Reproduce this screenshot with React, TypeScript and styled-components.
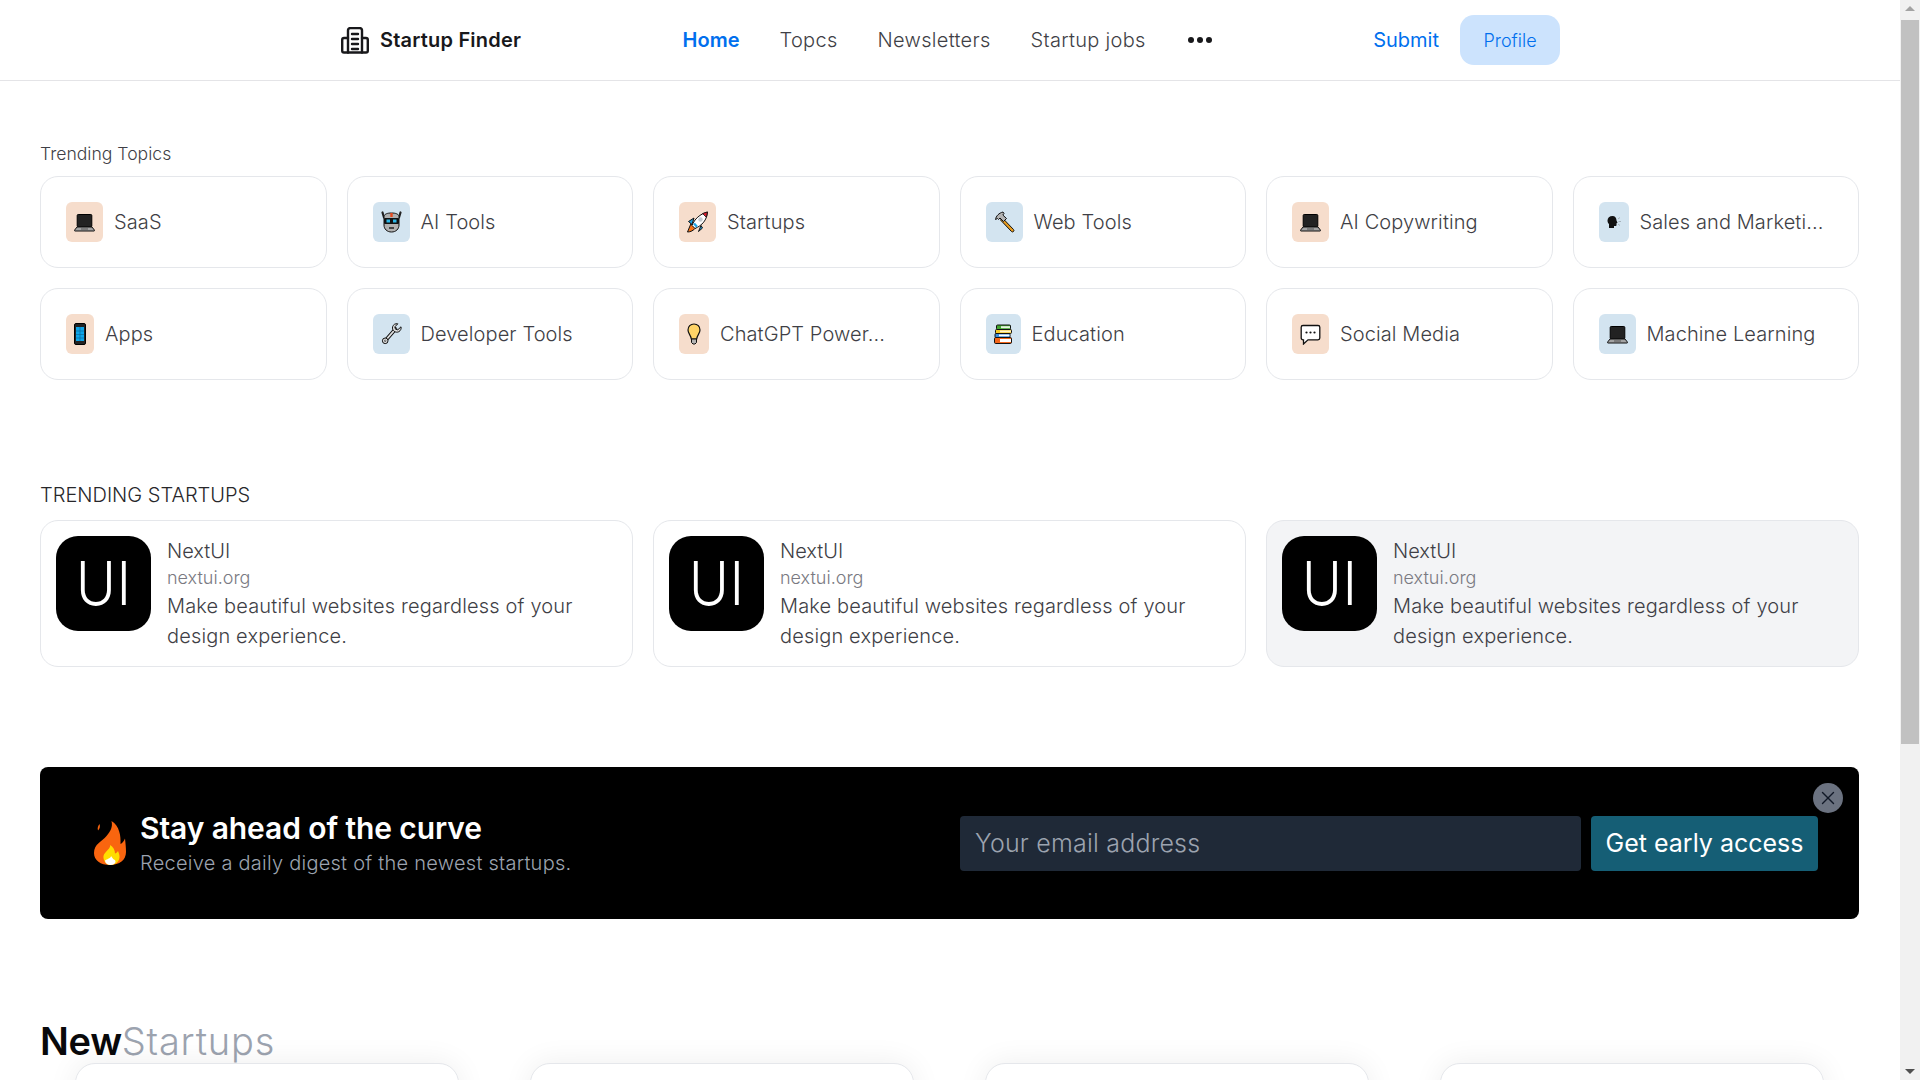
import { X } from 'lucide-react';
import { ReactNode } from 'react';
import styled, { createGlobalStyle } from 'styled-components';

const FONT = `Inter, "Liberation Sans", sans-serif`;

const GlobalStyle = createGlobalStyle`
  html, body {
    margin: 0;
    padding: 0;
    height: 100%;
    overflow: hidden;
    background: #ffffff;
    font-family: ${FONT};
  }
  * {
    box-sizing: border-box;
  }
`;

/* emoji drawings, the reference shows the black-outlined system set */
const LaptopIcon = () => (
  <svg width="21" height="22" viewBox="0 0 21 22">
    <rect x="3.2" y="3.500" width="14.600" height="12.500" rx="1" fill="#222" stroke="#000" />
    <path d="M3 16h15l2.500 3.200c.2.400 0 .8-.5.8H1c-.5 0-.7-.4-.5-.8z" fill="#a2a2a2" stroke="#111" />
    <path d="M7 18h7" stroke="#555" />
  </svg>
);

const RobotIcon = () => (
  <svg width="21" height="22" viewBox="0 0 21 22">
    <path d="M1.500 1.500l1.500 5M19.500 1.500l-1.500 5" fill="none" stroke="#222" strokeWidth="2.200" strokeLinecap="round" />
    <path d="M3 5c1-2 3-3 7.500-3s6.500 1 7.500 3v9c0 4-3 7-7.500 7S3 18 3 14z" fill="#b0b0b0" stroke="#111" />
    <rect x="9.300" y="2" width="2.400" height="4" fill="#e8491d" />
    <rect x="3" y="7" width="15" height="6" rx="1" fill="#111" />
    <rect x="5.500" y="8.500" width="3.500" height="3" fill="#2cb7e8" />
    <rect x="12" y="8.500" width="3.500" height="3" fill="#2cb7e8" />
    <path d="M8 17h5" stroke="#222" strokeWidth="1.500" />
  </svg>
);

const PhoneIcon = () => (
  <svg width="12" height="22" viewBox="0 0 12 22">
    <rect x=".5" y=".5" width="11" height="21" rx="1.500" fill="#222" stroke="#000" />
    <rect x="2" y="4" width="8" height="14" fill="#0ea5e9" />
    <path d="M2 8h8M2 11.500h8M2 15h8M6 4v14" stroke="#0b6b9e" strokeWidth=".7" />
  </svg>
);

const RocketIcon = () => (
  <svg width="21" height="22" viewBox="0 0 21 22">
    <path d="M4 12.500L.5 21c3 0 6-1.500 8-4z" fill="#f97316" stroke="#111" />
    <path d="M7 7L1.500 10.500l3.500 3zM14 14.500L11.500 20.500l4-3.500z" fill="#1ea3e6" stroke="#111" />
    <path d="M5 14.500C7.500 8 13 3 20.500 1 20 9 15 14.500 8 17.500z" fill="#ffffff" stroke="#111" />
    <path d="M15.500 2.500l5-1.500-1.200 5.300z" fill="#e11d2e" stroke="#111" strokeWidth=".8" />
    <circle cx="13.500" cy="8.500" r="2.200" fill="#c3cad0" />
    <path d="M7 12.500l3 3.300" stroke="#1ea3e6" strokeWidth="2.400" />
  </svg>
);

const HammerIcon = () => (
  <svg width="21" height="22" viewBox="0 0 21 22">
    <path d="M8.500 7l-2 2 11 11.500c.6.600 1.400.600 2 0 .6-.6.6-1.400 0-2z" fill="#e79b1e" stroke="#111" />
    <path d="M1.500 8.500C2 5 5 2 9 1l1 1.500L8.800 4l3.700 3.500-3 3L6 7 4.500 8.500l-1-1z" fill="#b4b4b4" stroke="#111" />
  </svg>
);

const WrenchIcon = () => (
  <svg width="21" height="22" viewBox="0 0 21 22">
    <path d="M4.500 17.500L14.500 6" stroke="#111" strokeWidth="3.600" strokeLinecap="round" />
    <path d="M4.500 17.500L14.500 6" stroke="#e0e0e0" strokeWidth="1.900" strokeLinecap="round" />
    <path
      d="M20 3.800l-3.200 3-2.300-.6-.7-2.300 3-3.100c-2.500-.5-4.700.9-5.200 3-.4 1.800.2 3.300 1.500 4.400 1.400 1.100 3.200 1.300 4.700.5 1.900-1 2.700-3.300 2.200-4.900z"
      fill="#e0e0e0"
      stroke="#111"
      strokeWidth="1"
    />
    <circle cx="4.200" cy="17.800" r="2.800" fill="#e0e0e0" stroke="#111" strokeWidth="1" />
    <circle cx="4.200" cy="17.800" r=".8" fill="#fff" stroke="#111" strokeWidth=".6" />
  </svg>
);

const BulbIcon = () => (
  <svg width="14" height="22" viewBox="0 0 14 22">
    <path d="M7 1C3.500 1 1 3.500 1 7c0 3.500 2.800 5 3.300 9h5.400c.5-4 3.300-5.500 3.300-9 0-3.500-2.500-6-6-6z" fill="#ffd467" stroke="#111" strokeWidth="1.200" />
    <path d="M4.500 16h5v3.500L8 21H6l-1.500-1.500z" fill="#b4b4b4" stroke="#111" />
  </svg>
);

const BooksIcon = () => (
  <svg width="19" height="22" viewBox="0 0 19 22">
    <rect x="2.500" y="2" width="14" height="4.500" rx="1" fill="#43a82f" stroke="#111" />
    <rect x="7" y="3.200" width="9" height="2" fill="#e6f5e0" />
    <rect x="1.500" y="6.500" width="16" height="4" rx="1" fill="#f7c824" stroke="#111" />
    <rect x="6" y="7.500" width="11" height="1.800" fill="#fff6cf" />
    <rect x="1" y="10.500" width="15" height="4" rx="1" fill="#3b8ddd" stroke="#111" />
    <rect x="5" y="11.500" width="10.500" height="1.800" fill="#ffffff" />
    <rect x=".5" y="14.500" width="17" height="6" rx="1.200" fill="#f4661b" stroke="#111" />
    <rect x="6" y="16" width="11" height="3" fill="#ffffff" />
  </svg>
);

const BubbleIcon = () => (
  <svg width="21" height="22" viewBox="0 0 21 22">
    <path d="M3 2.500h15c1 0 1.800.8 1.800 1.800V15c0 1-.8 1.800-1.800 1.800H8L3.500 21v-4.200H3c-1 0-1.800-.8-1.800-1.800V4.300c0-1 .8-1.800 1.800-1.800z" fill="#fff" stroke="#111" strokeWidth="1.300" />
    <circle cx="6.500" cy="9.500" r="1.100" fill="#111" />
    <circle cx="10.500" cy="9.500" r="1.100" fill="#111" />
    <circle cx="14.500" cy="9.500" r="1.100" fill="#111" />
  </svg>
);

const SpeakerIcon = () => (
  <svg width="14" height="22" viewBox="0 3 14 16">
    <path d="M5.500 5C2.500 5 .5 7 .5 9.500c0 1.800.8 2.800 1.500 3.600V17h5v-2h1.500c.6 0 1-.4 1-1v-1.700l1-.5-1-2.300C9.500 7 8 5 5.500 5z" fill="#111" />
    <path d="M11 8l2-1.500M11.500 10.500H14M11 13l2 1.500" stroke="#9aa5ad" strokeWidth=".8" />
  </svg>
);

const FireIcon = () => (
  <svg width="32" height="44" viewBox="0 0 32 44">
    <path d="M5.500 3c-1.500 2-2.300 4-1.500 6.500C5.500 8 6.500 5.500 5.500 3z" fill="#f9650f" />
    <path d="M17.500 0c1.500 6 -1 10 -5 15C8 20.500 0 23 0 32c0 7.500 6.500 12 16 12s16-5 16-13c0-5-.6-10-1-13.500-1.200 3-2.700 4.500-4.500 5.500C27 15 25.500 5 17.500 0z" fill="#f9650f" />
    <path d="M16 24c1 3-4 6-6 9.500-2 4 1.500 10.500 6 10.500 6 0 10-4 9.500-9-.2-2-1-4-1.500-5-1 1.500-2 2.300-3 2.500C21 29 19 25.500 16 24z" fill="#ffdd00" />
    <path d="M17 35c.3 1.500-2 2.500-3 2.800 0 .5-2.500 1-3 1.800C11 42 13 44 16 44c3.500 0 5.500-1.500 5.500-3.500 0-1-.5-1.500-1-1.800-.8.6-2.500-2.700-3.500-3.700z" fill="#ffffff" />
  </svg>
);

const BuildingLogo = () => (
  <BrandMark width="28" height="27" viewBox="0 0 28 27" fill="none" stroke="#18181b" strokeWidth="2.400" strokeLinecap="round" strokeLinejoin="round">
    <path d="M7 25.500V3.500c0-1.400 1-2.400 2.400-2.400h9.200c1.400 0 2.400 1 2.400 2.400v22" />
    <path d="M7 11H3C2 11 1.200 11.800 1.200 12.800v11c0 1 .8 1.700 1.800 1.700h22c1 0 1.800-.7 1.800-1.700v-11c0-1-.8-1.800-1.800-1.800h-4" />
    <path d="M11 7h6M11 12h6M11 17h6M11 22h6" />
  </BrandMark>
);

const DotsIcon = () => (
  <DotsMark width="24" height="8" viewBox="0 0 24 8" fill="#18181b">
    <circle cx="3" cy="4" r="3" />
    <circle cx="12" cy="4" r="3" />
    <circle cx="21" cy="4" r="3" />
  </DotsMark>
);

type Tint = 'peach' | 'blue';

const topics: { label: string; tint: Tint; icon: ReactNode }[] = [
  { label: 'SaaS', tint: 'peach', icon: <LaptopIcon /> },
  { label: 'AI Tools', tint: 'blue', icon: <RobotIcon /> },
  { label: 'Startups', tint: 'peach', icon: <RocketIcon /> },
  { label: 'Web Tools', tint: 'blue', icon: <HammerIcon /> },
  { label: 'AI Copywriting', tint: 'peach', icon: <LaptopIcon /> },
  { label: 'Sales and Marketi...', tint: 'blue', icon: <SpeakerIcon /> },
  { label: 'Apps', tint: 'peach', icon: <PhoneIcon /> },
  { label: 'Developer Tools', tint: 'blue', icon: <WrenchIcon /> },
  { label: 'ChatGPT Power...', tint: 'peach', icon: <BulbIcon /> },
  { label: 'Education', tint: 'blue', icon: <BooksIcon /> },
  { label: 'Social Media', tint: 'peach', icon: <BubbleIcon /> },
  { label: 'Machine Learning', tint: 'blue', icon: <LaptopIcon /> },
];

export default function App() {
  return (
    <Shell>
      <GlobalStyle />
      <Page>
        <Header>
          <HeaderInner>
            <Brand>
              <BuildingLogo />
              <BrandName>Startup Finder</BrandName>
            </Brand>
            <Nav>
              <NavLink $active>Home</NavLink>
              <NavLink>Topcs</NavLink>
              <NavLink>Newsletters</NavLink>
              <NavLink>Startup jobs</NavLink>
              <DotsIcon />
            </Nav>
            <Actions>
              <SubmitLink>Submit</SubmitLink>
              <ProfileButton>Profile</ProfileButton>
            </Actions>
          </HeaderInner>
        </Header>
        <Main>
          <TopicsLabel>Trending Topics</TopicsLabel>
          <TopicGrid>
            {topics.map((t) => (
              <TopicCard key={t.label}>
                <EmojiBox $tint={t.tint}>{t.icon}</EmojiBox>
                <TopicName>{t.label}</TopicName>
              </TopicCard>
            ))}
          </TopicGrid>

          <StartupsLabel>TRENDING STARTUPS</StartupsLabel>
          <StartupGrid>
            {[false, false, true].map((hovered, i) => (
              <StartupCard key={i} $hovered={hovered}>
                <StartupLogo>
                  <LogoText>UI</LogoText>
                </StartupLogo>
                <StartupBody>
                  <StartupName>NextUI</StartupName>
                  <StartupUrl>nextui.org</StartupUrl>
                  <StartupText>Make beautiful websites regardless of your design experience.</StartupText>
                </StartupBody>
              </StartupCard>
            ))}
          </StartupGrid>

          <Banner>
            <CloseButton>
              <X size={22} strokeWidth={1.5} />
            </CloseButton>
            <BannerLead>
              <FireIcon />
              <div>
                <BannerTitle>Stay ahead of the curve</BannerTitle>
                <BannerText>Receive a daily digest of the newest startups.</BannerText>
              </div>
            </BannerLead>
            <SignupForm>
              <EmailInput placeholder="Your email address" />
              <AccessButton>Get early access</AccessButton>
            </SignupForm>
          </Banner>

          <NewHeading>
            New<NewHeadingMuted>Startups</NewHeadingMuted>
          </NewHeading>
          <NewGrid>
            <NewCard />
            <NewCard />
            <NewCard />
            <NewCard />
          </NewGrid>
        </Main>
      </Page>
      <ScrollTrack>
        <ScrollArrow $dir="up" />
        <ScrollThumb />
        <ScrollSpace />
        <ScrollArrow $dir="down" />
      </ScrollTrack>
    </Shell>
  );
}

const Shell = styled.div`
  display: flex;
  height: 100vh;
  overflow: hidden;
`;

const Page = styled.div`
  flex: 1;
  min-width: 0;
  overflow: hidden;
`;

const Header = styled.header`
  height: 81px;
  border-bottom: 1px solid #e4e4e7;
`;

const HeaderInner = styled.div`
  display: flex;
  align-items: center;
  justify-content: space-between;
  width: 1220px;
  height: 80px;
  margin: 0 auto;
`;

const Brand = styled.div`
  display: flex;
  align-items: center;
  gap: 11px;
`;

const BrandMark = styled.svg`
  margin-left: 1px;
`;

const BrandName = styled.span`
  font-size: 20px;
  font-weight: 600;
  letter-spacing: 0.2px;
  color: #18181b;
`;

const Nav = styled.nav`
  display: flex;
  align-items: center;
  gap: 40px;
`;

const NavLink = styled.a<{ $active?: boolean }>`
  font-size: 20px;
  font-weight: ${(p) => (p.$active ? 600 : 350)};
  letter-spacing: ${(p) => (p.$active ? 0 : 0.3)}px;
  color: ${(p) => (p.$active ? '#006fee' : '#3f3f46')};
`;

const DotsMark = styled.svg`
  margin-left: 2px;
`;

const Actions = styled.div`
  display: flex;
  align-items: center;
  gap: 21px;
`;

const SubmitLink = styled.a`
  font-size: 20px;
  color: #006fee;
`;

const ProfileButton = styled.button`
  width: 100px;
  height: 50px;
  border: 0;
  border-radius: 14px;
  background: #cce3fd;
  color: #006fee;
  font-family: ${FONT};
  font-size: 18px;
  font-weight: 350;
`;

const Main = styled.main`
  padding: 61px 41px 0 40px;
`;

const TopicsLabel = styled.div`
  font-size: 17.6px;
  font-weight: 350;
  line-height: 24px;
  color: #3f3f46;
`;

const TopicGrid = styled.div`
  display: grid;
  grid-template-columns: repeat(6, 1fr);
  gap: 20px;
  margin-top: 10px;
`;

const TopicCard = styled.div`
  display: flex;
  align-items: center;
  gap: 11px;
  height: 92px;
  padding-left: 25px;
  border: 1px solid #e5e7eb;
  border-radius: 18px;
  background: #ffffff;
`;

const EmojiBox = styled.span<{ $tint: Tint }>`
  display: flex;
  align-items: center;
  justify-content: center;
  height: 40px;
  padding: 0 8px;
  border-radius: 6px;
  background: ${(p) => (p.$tint === 'peach' ? '#f6ddcc' : '#d3e4f0')};
`;

const TopicName = styled.span`
  font-size: 20px;
  font-weight: 350;
  letter-spacing: 0.1px;
  color: #3f3f46;
  white-space: nowrap;
`;

const StartupsLabel = styled.div`
  margin-top: 101px;
  font-size: 20px;
  font-weight: 350;
  line-height: 28px;
  color: #27272a;
`;

const StartupGrid = styled.div`
  display: grid;
  grid-template-columns: repeat(3, 1fr);
  gap: 20px;
  margin-top: 11px;
`;

const StartupCard = styled.div<{ $hovered: boolean }>`
  display: flex;
  gap: 16px;
  height: 147px;
  padding: 15px;
  border: 1px solid #e5e7eb;
  border-radius: 18px;
  background: ${(p) => (p.$hovered ? '#f3f4f6' : '#ffffff')};
`;

const StartupLogo = styled.div`
  display: flex;
  flex: none;
  align-items: center;
  justify-content: center;
  width: 95px;
  height: 95px;
  padding-bottom: 2px;
  border-radius: 22px;
  background: #000000;
`;

const LogoText = styled.span`
  display: block;
  color: #ffffff;
  font-size: 60px;
  font-weight: 300;
  line-height: 1;
  letter-spacing: 1px;
  transform: scaleX(0.9);
`;

const StartupBody = styled.div`
  min-width: 0;
  padding-top: 1px;
  padding-right: 30px;
`;

const StartupName = styled.div`
  font-size: 20px;
  font-weight: 350;
  line-height: 28px;
  color: #3f3f46;
`;

const StartupUrl = styled.div`
  font-size: 18px;
  font-weight: 350;
  line-height: 26px;
  color: #7a7a82;
`;

const StartupText = styled.div`
  font-size: 20px;
  font-weight: 350;
  line-height: 30px;
  letter-spacing: 0.15px;
  color: #3f3f46;
`;

const Banner = styled.section`
  position: relative;
  display: flex;
  align-items: center;
  justify-content: space-between;
  height: 152px;
  margin-top: 100px;
  padding: 0 41px 0 54px;
  border-radius: 8px;
  background: #000000;
`;

const CloseButton = styled.button`
  position: absolute;
  top: 16px;
  right: 16px;
  display: flex;
  align-items: center;
  justify-content: center;
  width: 30px;
  height: 30px;
  padding: 0;
  border: 0;
  border-radius: 50%;
  background: #6b7280;
  color: #111827;
`;

const BannerLead = styled.div`
  display: flex;
  align-items: center;
  gap: 14px;
`;

const BannerTitle = styled.div`
  font-size: 30px;
  font-weight: 600;
  line-height: 36px;
  letter-spacing: -0.1px;
  color: #ffffff;
`;

const BannerText = styled.div`
  margin-top: 3px;
  font-size: 20px;
  font-weight: 350;
  line-height: 28px;
  letter-spacing: 0.25px;
  color: #9ca3af;
`;

const SignupForm = styled.form`
  display: flex;
  gap: 10px;
`;

const EmailInput = styled.input`
  width: 621px;
  height: 55px;
  padding: 0 15px;
  border: 0;
  border-radius: 4px;
  background: #1f2937;
  color: #ffffff;
  font-family: ${FONT};
  font-size: 25px;
  font-weight: 350;
  letter-spacing: 0.2px;

  &::placeholder {
    color: #9ca3af;
    opacity: 1;
  }
`;

const AccessButton = styled.button`
  width: 227px;
  height: 55px;
  padding: 0;
  border: 0;
  border-radius: 4px;
  background: #155e75;
  color: #ffffff;
  font-family: ${FONT};
  font-size: 25px;
  font-weight: 400;
`;

const NewHeading = styled.h2`
  margin: 102px 0 0;
  font-size: 38px;
  font-weight: 600;
  line-height: 40px;
  letter-spacing: -0.3px;
  color: #09090b;
`;

const NewHeadingMuted = styled.span`
  font-weight: 300;
  letter-spacing: 0.8px;
  color: #9ca3af;
`;

const NewGrid = styled.div`
  display: grid;
  grid-template-columns: repeat(4, 1fr);
  justify-items: center;
  margin-top: 2px;
`;

const NewCard = styled.div`
  width: 384px;
  height: 320px;
  border: 1px solid #e5e7eb;
  border-radius: 20px;
  background: #ffffff;
  box-shadow: 0 0 30px rgba(0, 0, 0, 0.07);
`;

const ScrollTrack = styled.aside`
  display: flex;
  flex: none;
  flex-direction: column;
  width: 20px;
  background: #f1f1f1;
`;

const ScrollArrow = styled.div<{ $dir: 'up' | 'down' }>`
  flex: none;
  width: 0;
  height: 0;
  margin: ${(p) => (p.$dir === 'up' ? '6px 5px 9px' : '9px 5px 6px')};
  border-left: 5px solid transparent;
  border-right: 5px solid transparent;
  ${(p) => (p.$dir === 'up' ? 'border-bottom: 5px solid #a3a3a3;' : 'border-top: 5px solid #505050;')}
`;

const ScrollThumb = styled.div`
  flex: none;
  height: 724px;
  margin: 0 1px;
  background: #c1c1c1;
`;

const ScrollSpace = styled.div`
  flex: 1;
`;
